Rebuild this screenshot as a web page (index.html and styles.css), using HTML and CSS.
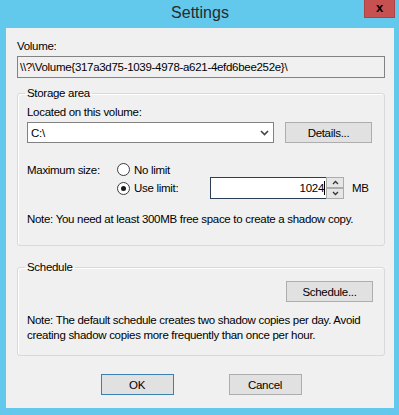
FILE: index.html
```html
<!DOCTYPE html>
<html lang="en">
  <head>
    <meta charset="UTF-8" />
    <meta name="viewport" content="width=device-width, initial-scale=1.0" />
    <title>Settings</title>

    <link rel="stylesheet" href="styles.css">
  </head>

  <body>
    <div class="window">
      <div class="title-bar">
        <span></span>
        <div class="title">Settings</div>
        <div class="close-btn">x</div>
      </div>

      <div class="client">
        <div class="label">Volume:</div>
        <div class="readonly-field">\\?\Volume{317a3d75-1039-4978-a621-4efd6bee252e}\</div>

        <fieldset class="group storage">
          <legend>Storage area</legend>
          <div class="label">Located on this volume:</div>
          <div class="combo-row">
            <div class="combo">
              <span>C:\</span>
              <svg class="combo-arrow" width="9" height="6" viewBox="0 0 9 6">
                <path d="M1 1 L4.5 4.5 L8 1" fill="none" stroke="#444" stroke-width="1.6" />
              </svg>
            </div>
            <button class="btn">Details...</button>
          </div>

          <div class="size-grid">
            <div class="size-label">Maximum size:</div>
            <label class="radio"><span class="radio-dot"></span>No limit</label>
            <span></span>
            <span></span>
            <label class="radio"><span class="radio-dot checked"></span>Use limit:</label>
            <div class="spinner">
              <div class="spin-input">1024<span class="caret"></span></div>
              <div class="spin-buttons">
                <div class="spin-btn">
                  <svg width="7" height="5" viewBox="0 0 7 5"><path d="M1 4 L3.5 1.5 L6 4" fill="none" stroke="#333" stroke-width="1.3" /></svg>
                </div>
                <div class="spin-btn">
                  <svg width="7" height="5" viewBox="0 0 7 5"><path d="M1 1 L3.5 3.5 L6 1" fill="none" stroke="#333" stroke-width="1.3" /></svg>
                </div>
              </div>
              <span class="unit">MB</span>
            </div>
          </div>

          <p class="note">Note: You need at least 300MB free space to create a shadow copy.</p>
        </fieldset>

        <fieldset class="group schedule">
          <legend>Schedule</legend>
          <div class="right-row">
            <button class="btn">Schedule...</button>
          </div>
          <p class="note two-line">Note: The default schedule creates two shadow copies per day. Avoid<br>creating shadow copies more frequently than once per hour.</p>
        </fieldset>

        <div class="dialog-buttons">
          <button class="btn wide default">OK</button>
          <button class="btn wide">Cancel</button>
        </div>
      </div>
    </div>
  </body>
</html>
```

FILE: styles.css
```css
body {
  margin: 0;
  background-color: #62c8ec;
  font-family: "Liberation Sans", Arial, sans-serif;
  font-size: 11.5px;
  letter-spacing: -0.3px;
  color: #000000;
}

.window {
  width: 399px;
  height: 415px;
  padding: 0 5px 0 6px;
  box-sizing: border-box;
}

.title-bar {
  height: 28px;
  display: grid;
  grid-template-columns: 1fr auto 1fr;
}

.title {
  font-size: 16px;
  letter-spacing: 0;
  line-height: 26px;
  color: #2a2a2a;
}

.close-btn {
  justify-self: end;
  width: 31px;
  height: 18px;
  margin-right: -1px;
  background-color: #c75050;
  border: 1px solid #a84444;
  border-top: none;
  box-sizing: border-box;
  text-align: center;
  font-weight: bold;
  font-size: 13px;
  letter-spacing: 0;
  line-height: 16px;
  color: #000000;
}

.client {
  height: 380px;
  background-color: #f0f0f0;
  padding: 11px 9px 0 11px;
  box-sizing: border-box;
}

.label {
  line-height: 14px;
}

.readonly-field {
  margin-top: 3px;
  height: 22px;
  border: 1px solid #828282;
  box-sizing: border-box;
  padding-left: 2px;
  line-height: 20px;
  white-space: nowrap;
  overflow: hidden;
}

.group {
  margin: 0;
  border: 1px solid #d9d9d9;
  border-radius: 3px;
  box-shadow: inset 1px 1px 0 #ffffff;
}

.group legend {
  padding: 0 2px;
  margin-left: -2px;
  line-height: 14px;
}

.storage {
  margin-top: 8px;
  padding: 5px 11px 19px 9px;
}

.combo-row {
  display: flex;
  gap: 11px;
  margin-top: 3px;
}

.combo {
  width: 247px;
  height: 21px;
  background-color: #ffffff;
  border: 1px solid #828282;
  box-sizing: border-box;
  display: flex;
  align-items: center;
  justify-content: space-between;
  padding: 0 4px 0 3px;
}

.btn {
  width: 87px;
  height: 21px;
  background-color: #e1e1e1;
  border: 1px solid #adadad;
  font-family: inherit;
  font-size: 11.5px;
  letter-spacing: -0.3px;
  color: #000000;
  padding: 0;
}

.size-grid {
  display: grid;
  grid-template-columns: 90px 93px auto;
  grid-template-rows: 15px 22px;
  margin-top: 19px;
  align-items: center;
}

.radio {
  display: flex;
  align-items: center;
  gap: 4px;
}

.radio-dot {
  width: 11px;
  height: 11px;
  border: 1px solid #3c3c3c;
  border-radius: 50%;
  background-color: #ffffff;
  display: flex;
  align-items: center;
  justify-content: center;
}

.radio-dot.checked::after {
  content: "";
  width: 5px;
  height: 5px;
  border-radius: 50%;
  background-color: #1a1a1a;
}

.spinner {
  display: flex;
  align-items: center;
  height: 22px;
}

.spin-input {
  width: 116px;
  height: 22px;
  box-sizing: border-box;
  background-color: #ffffff;
  border: 1px solid #2a3f57;
  border-right: none;
  text-align: right;
  line-height: 20px;
  padding-right: 1px;
}

.caret {
  display: inline-block;
  width: 1px;
  height: 14px;
  background-color: #000000;
  vertical-align: -3px;
}

.spin-buttons {
  display: flex;
  flex-direction: column;
  height: 22px;
}

.spin-btn {
  width: 18px;
  height: 11px;
  box-sizing: border-box;
  background-color: #e6e6e6;
  border: 1px solid #acacac;
  display: flex;
  align-items: center;
  justify-content: center;
}

.unit {
  margin-left: 8px;
}

.note {
  margin: 13px 0 0;
  line-height: 14px;
  white-space: nowrap;
}

.schedule {
  margin-top: 14px;
  padding: 7px 11px 12px 9px;
}

.right-row {
  display: flex;
  justify-content: flex-end;
}

.note.two-line {
  margin-top: 11px;
  line-height: 15px;
}

.dialog-buttons {
  display: flex;
  justify-content: center;
  gap: 55px;
  margin-top: 18px;
}

.btn.wide {
  width: 73px;
}

.btn.default {
  border-color: #3c7fb1;
}
```
